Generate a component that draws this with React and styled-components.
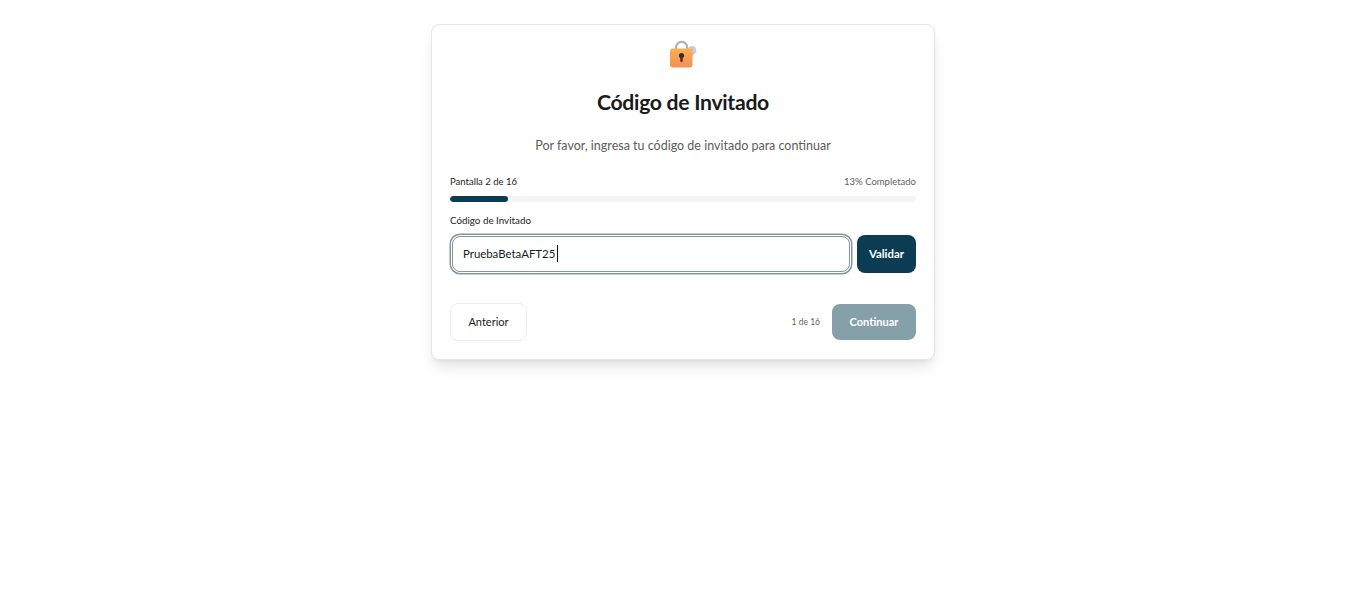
import React, { useState } from 'react'
import styled, { createGlobalStyle } from 'styled-components'

const GlobalStyle = createGlobalStyle`
  html, body {
    margin: 0;
    background: #fff;
    font-family: Lato, "Noto Sans", sans-serif;
    color: #171717;
  }
`

const Page = styled.main`
  min-height: 599px;
  box-sizing: border-box;
  padding-top: 24px;
  display: flex;
  justify-content: center;
  align-items: flex-start;
`

const Card = styled.section`
  width: 504px;
  height: 336px;
  box-sizing: border-box;
  padding: 15px 18px 18px;
  background: #fff;
  border: 1px solid #e6e6e6;
  border-radius: 8px;
  box-shadow: 0 10px 15px -3px rgba(0, 0, 0, 0.1), 0 4px 6px -4px rgba(0, 0, 0, 0.1);
  display: flex;
  flex-direction: column;
`

const IconSlot = styled.div`
  height: 31px;
  display: flex;
  justify-content: center;
`

const Title = styled.h1`
  margin: 17px 0 0;
  font-size: 21.2px;
  line-height: 28px;
  font-weight: 700;
  letter-spacing: -0.3px;
  text-align: center;
  color: #1a1a1a;
`

const Subtitle = styled.p`
  margin: 20px 0 0;
  font-size: 12.5px;
  line-height: 20px;
  text-align: center;
  color: #5c5c5c;
`

const ProgressHead = styled.div`
  margin-top: 17px;
  height: 16px;
  display: flex;
  justify-content: space-between;
  align-items: center;
`

const ProgressLabel = styled.span`
  font-size: 9.5px;
  color: ${(p) => (p.$muted ? '#5f5f5f' : '#1c1c1c')};
`

const Track = styled.div`
  margin-top: 7px;
  height: 6px;
  border-radius: 3px;
  background: #f4f4f4;
  overflow: hidden;
`

const Fill = styled.div`
  height: 100%;
  border-radius: 3px;
  background: #0b3c53;
`

const FieldLabel = styled.label`
  display: block;
  margin-top: 11px;
  font-size: 9.8px;
  line-height: 15px;
  color: #1c1c1c;
`

const FieldRow = styled.div`
  margin-top: 6px;
  display: flex;
  gap: 5px;
  align-items: center;
`

const InputBox = styled.div`
  flex: 1;
  height: 36px;
  box-sizing: border-box;
  margin: 2px;
  padding: 0 0 2px 10px;
  display: flex;
  align-items: center;
  background: #fdfefe;
  border: 1px solid #84959c;
  border-radius: 8px;
  box-shadow: 0 0 0 1px #fff, 0 0 0 2.5px #84959c;
  font-size: 11.4px;
  color: #1c1c1c;
`

const Caret = styled.span`
  display: inline-block;
  width: 1px;
  height: 17px;
  margin-left: 2px;
  background: #111;
`

const Button = styled.button`
  height: ${(p) => p.$h}px;
  width: ${(p) => p.$w}px;
  padding: 0 0 2px;
  border-radius: 8px;
  font-family: inherit;
  font-size: ${(p) => p.$size}px;
  font-weight: ${(p) => p.$weight || 700};
  border: ${(p) => (p.$outline ? '1px solid #ececec' : 'none')};
  background: ${(p) => p.$bg || '#fff'};
  color: ${(p) => p.$color || '#fff'};
`

const Footer = styled.footer`
  margin-top: 29px;
  display: flex;
  justify-content: space-between;
  align-items: center;
`

const FooterRight = styled.div`
  display: flex;
  align-items: center;
  gap: 12px;
`

const PageCount = styled.span`
  font-size: 8.5px;
  color: #5f5f5f;
`

const LockKeyIcon = () => (
  <svg width="27" height="28" viewBox="0 0 27 28" aria-hidden="true">
    <defs>
      <linearGradient id="body" x1="0" y1="0" x2="0" y2="1">
        <stop offset="0" stopColor="#f9b04f" />
        <stop offset="1" stopColor="#f58f55" />
      </linearGradient>
    </defs>
    <circle cx="22" cy="10.5" r="4.4" fill="#cfc6de" />
    <path d="M19.5 11l-3 7 4 2.5 4-8z" fill="#c7bdd8" />
    <path d="M6 10V7.4a5.6 5.6 0 0 1 11.2 0V10" fill="none" stroke="#b3b1b4" strokeWidth="2.2" />
    <rect x="0" y="8.5" width="22.5" height="19" rx="3" fill="url(#body)" />
    <circle cx="11.5" cy="15.6" r="2.6" fill="#3f2a33" />
    <rect x="10.3" y="16" width="2.4" height="6" rx="1.2" fill="#3f2a33" />
  </svg>
)

const App = () => {
  const [code] = useState('PruebaBetaAFT25')

  return (
    <>
      <GlobalStyle />
      <Page>
        <Card>
          <IconSlot>
            <LockKeyIcon />
          </IconSlot>
          <Title>Código de Invitado</Title>
          <Subtitle>Por favor, ingresa tu código de invitado para continuar</Subtitle>

          <ProgressHead>
            <ProgressLabel>Pantalla 2 de 16</ProgressLabel>
            <ProgressLabel $muted>13% Completado</ProgressLabel>
          </ProgressHead>
          <Track>
            <Fill style={{ width: `${(2 / 16) * 100}%` }} />
          </Track>

          <FieldLabel>Código de Invitado</FieldLabel>
          <FieldRow>
            <InputBox>
              {code}
              <Caret />
            </InputBox>
            <Button $w={59} $h={38} $size={11.4} $bg="#0b3c53">Validar</Button>
          </FieldRow>

          <Footer>
            <Button $w={77} $h={38} $size={11} $outline $color="#1c1c1c" $weight={400}>Anterior</Button>
            <FooterRight>
              <PageCount>1 de 16</PageCount>
              <Button $w={84} $h={36} $size={11} $bg="#85a0a9">Continuar</Button>
            </FooterRight>
          </Footer>
        </Card>
      </Page>
    </>
  )
}

export default App
